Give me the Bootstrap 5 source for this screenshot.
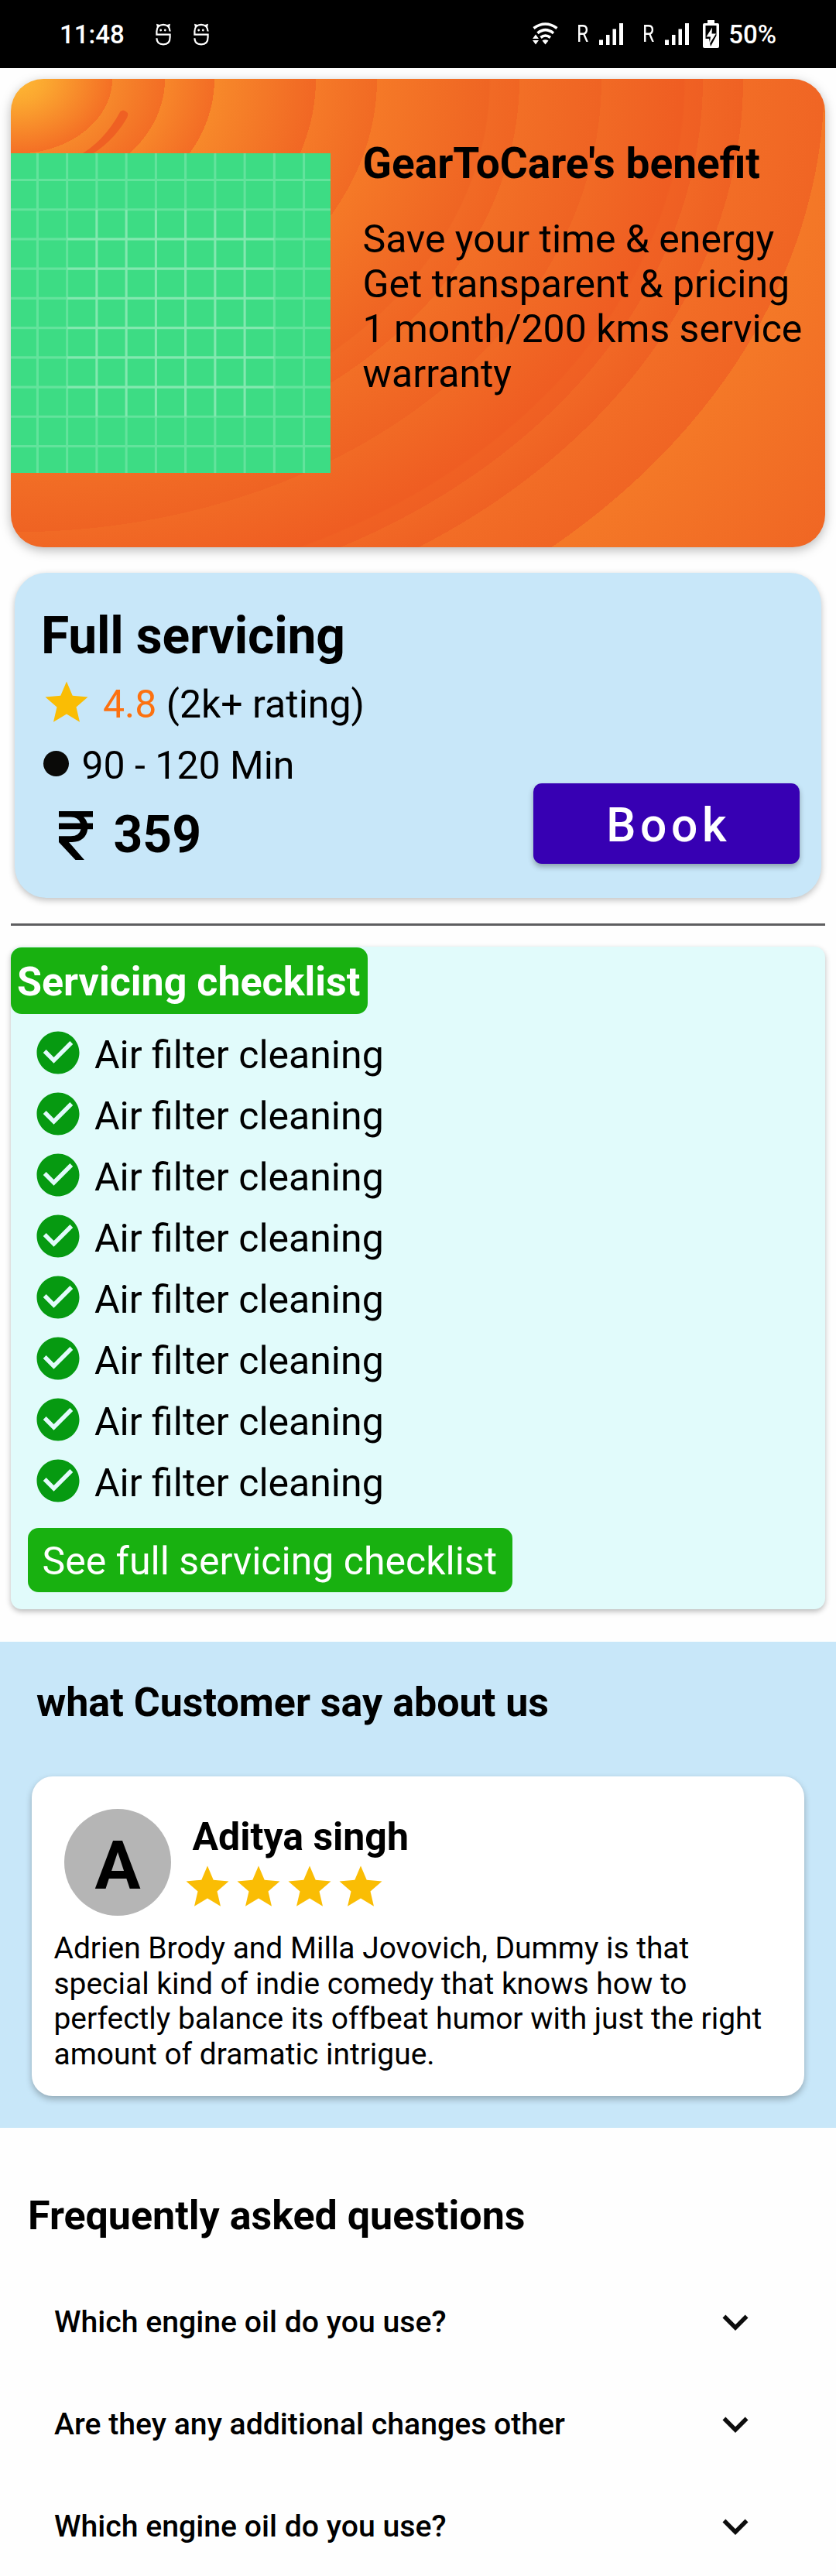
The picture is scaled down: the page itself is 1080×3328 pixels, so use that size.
<!DOCTYPE html>
<html lang="en">
<head>
<meta charset="utf-8">
<meta name="viewport" content="width=device-width, initial-scale=1">
<title>GearToCare</title>
<link href="https://cdn.jsdelivr.net/npm/bootstrap@5.3.0/dist/css/bootstrap.min.css" rel="stylesheet">
<style>
body{font-family:Roboto,"Liberation Sans",sans-serif;color:#000;background:#fefefe;font-size:50px;line-height:58px;min-height:3328px}
h1,h2,h3,p,ul{margin:0}
svg{display:block;flex:none}
.statusbar{height:88px;background:#000;color:#fff;font-size:33px;line-height:91px;font-weight:500;padding:0 77px 0 77px}
.statusbar .roam{font-weight:400;font-size:31px;width:15px;line-height:86px;transform:scaleX(.8);transform-origin:left}
.hero{margin:14px 14px 0;height:605px;border-radius:42px;overflow:hidden;
background:radial-gradient(ellipse 1300px 1005px at 6px 0,#ffb934 0,#fba730 40px,#f46f25 125px,#f6882b 125px,#f36d25 193px,#f7872a 193px,#f36c25 257px,#f7892a 257px,#f16724 388px,#f57a28 388px,#f16a24 467px,#f57927 467px,#ef6523 612px,#f16a25 614px,#f06523 651px,#f26f26 651px,#ef6323 757px,#f16a25 757px,#ef5d22 863px,#f06123 866px,#ef5f23 888px,#f16825 888px,#ef6123 940px,#f26d26 940px,#f06524 1045px,#f47827 1045px,#f06624 1300px)}
.hero-wrap{filter:drop-shadow(0 4px 7px rgba(0,0,0,.27))}
.hero .streak{position:absolute;left:14px;top:0}
.hero .art{margin-top:96px;width:413px;height:413px}
.hero .copy{padding:76.6px 0 0 41.500px;white-space:nowrap}
.hero h1{font-size:55px;line-height:64px;font-weight:700;margin-bottom:37.3px}
.service{margin:33px 19px 0;height:420px;border-radius:41px;background:#c8e7f9;border:0;box-shadow:0 3px 8px rgba(0,0,0,.25);padding:42.5px 28.5px 44px 34px}
.service h2{font-size:66px;line-height:78px;font-weight:700;letter-spacing:-.2px}
.rating{margin-top:14.5px;height:66px;gap:14px}
.rating .score{color:#fc7110}
.duration{margin-top:18.8px;padding-left:3px;gap:16.500px}
.dot{width:33px;height:33px;border-radius:50%;background:#0a0a08;margin-top:-4px}
.price{margin-top:22.7px;padding-left:23px;gap:26.5px;font-size:66px;line-height:78px;font-weight:700}
.btn-book,.btn-book:hover{background:#3700b3;color:#fff;width:343.5px;height:103.7px;border:0;border-radius:11px;font-size:60.5px;font-weight:500;letter-spacing:5.7px;line-height:98px;padding:6px 0 0 6px;box-shadow:0 4px 7px rgba(0,0,0,.3)}
.rule{margin:33px 14px 0;height:3px;background:#5e5e60}
.checks{margin:27px 14px 0;height:856px;border:0;border-radius:14px;background:#e1fbfb;box-shadow:0 3px 7px rgba(0,0,0,.27);padding-top:1px}
.checks h2{width:461px;height:86px;border-radius:14px;background:#18b110;color:#fff;font-size:52px;font-weight:700;line-height:82px;padding:4px 0 0 8px;white-space:nowrap}
.checks li{height:79px;gap:14px;padding-left:28px}
.checks li span{padding-top:7px}
.btn-more,.btn-more:hover{margin:22px 0 0 22px;width:626px;height:83px;border:0;border-radius:14px;background:#18b110;color:#fff;font-size:50px;line-height:79px;padding:4px 0 0 18.500px;text-align:left;white-space:nowrap}
.reviews{margin-top:42px;height:628px;background:#c8e7f9;padding:47.6px 41px 0}
.reviews h2{font-size:52px;line-height:62px;font-weight:700;padding-left:6px}
.review{margin-top:64px;height:413.5px;border:0;border-radius:27px;box-shadow:0 4px 8px rgba(0,0,0,.27);padding:42.5px 0 0}
.avatar{width:138px;height:138px;border-radius:50%;background:#b5b5b5;font-size:88px;font-weight:700;line-height:130px;padding-top:8px;margin-left:42px}
.review .who{margin:7px 0 0 13.500px}
.review h3{font-size:50px;line-height:58px;font-weight:700;padding-left:14px;margin-bottom:2.7px}
.review p{font-size:38.950px;line-height:45.8px;margin:19.8px 0 0 28.500px;white-space:nowrap}
.faq{padding:82.8px 97px 0 36px}
.faq h2{font-size:52px;line-height:62px;font-weight:700;margin-bottom:72.8px}
.faq .ask{height:66px;margin-bottom:66px;padding-left:34px;font-size:39.2px;line-height:46px;font-weight:500}
.faq .ask:last-child{margin-bottom:0}
</style>
</head>
<body>
<svg width="0" height="0" class="position-absolute">
  <defs>
    <symbol id="star" viewBox="0 0 24 24"><path fill="#fabd04" d="M12 17.27 18.18 21l-1.64-7.03L22 9.24l-7.19-.61L12 2 9.19 8.63 2 9.24l5.46 4.73L5.82 21z"/></symbol>
    <symbol id="check" viewBox="0 0 24 24"><path fill="#069a11" d="M12 2C6.48 2 2 6.48 2 12s4.48 10 10 10 10-4.48 10-10S17.52 2 12 2zm-2 15-5-5 1.41-1.41L10 14.17l7.59-7.59L19 8l-9 9z"/></symbol>
    <symbol id="more" viewBox="0 0 24 24"><path fill="#0d0d0d" d="M16.59 8.59 12 13.17 7.41 8.59 6 10l6 6 6-6z"/></symbol>
    <symbol id="mascot" viewBox="0 0 20 29"><g fill="none" stroke="#fff" stroke-width="2.2"><path d="M18.600 10.500C18.400 5 15 1.900 10 1.900S1.400 5 1.400 10.500V14.600H18.600V18C18.600 24.500 15.500 27.400 10 27.400S1.500 24.500 1.400 19.300"/></g><path fill="#fff" d="M1 .8 6 2.200 2 6zM19 .8 14 2.200 18 6z"/><circle cx="6.700" cy="9" r="1.400" fill="#fff"/><circle cx="12.300" cy="9" r="1.400" fill="#fff"/></symbol>
    <symbol id="signal" viewBox="0 0 31 28"><path fill="#fff" d="M0 21.500h5V28H0zM9 15h4.500v13H9zM17.500 7.500H22V28h-4.500zM26 0h5v28h-5z"/></symbol>
  </defs>
</svg>

<header class="statusbar d-flex align-items-center">
  <span>11:48</span>
  <svg width="20" height="29" style="margin-left:40px"><use href="#mascot"/></svg>
  <svg width="20" height="29" style="margin-left:29px"><use href="#mascot"/></svg>
  <div class="d-flex align-items-center ms-auto">
    <svg width="33" height="30" viewBox="0 0 33 30"><g fill="none" stroke="#fff" stroke-width="3.600"><path d="M1.500 7.500Q16.500-3.500 31.500 7.500M6.500 13.800Q16.500 5.500 27 13.800M10.500 19.500Q16.500 14.500 23 19.500"/></g><path fill="#fff" d="M16.500 28.500 12.500 23.500Q16.500 21 20.500 23.500zM0 21h8l-4-5.500zM0 23h8l-4 5.500z"/></svg>
    <span class="roam" style="margin-left:24px">R</span>
    <svg width="31" height="28" style="margin-left:14px"><use href="#signal"/></svg>
    <span class="roam" style="margin-left:25px">R</span>
    <svg width="31" height="28" style="margin-left:14px"><use href="#signal"/></svg>
    <svg width="21" height="36" viewBox="0 0 21 36" style="margin-left:18px"><path fill="#fff" d="M6 0h9v4h4q2 0 2 2v28q0 2-2 2H2q-2 0-2-2V6q0-2 2-2h4z"/><path d="M3.500 7h14v13L10 34 8 24H3.500z" fill="#000"/><path fill="#fff" d="M12 9.500 4.500 21.500H10L8.500 31 17 17.500h-5.500z"/></svg>
    <span style="margin-left:12px">50%</span>
  </div>
</header>

<main>
  <div class="hero-wrap">
    <section class="hero d-flex align-items-start">
      <svg class="streak" width="180" height="110" viewBox="0 0 180 110"><path d="M141.500 42Q146 38 151 44 152 47 149 52 130 84 98 101L86 100Q120 82 141.500 42z" fill="#ef6023"/></svg>
      <svg class="art position-relative" viewBox="0 0 108 108"><path fill="#3ddc84" d="M0 0h108v108H0z"/><path fill="none" stroke="#fff" stroke-opacity=".2" stroke-width=".8" d="M9 0v108M19 0v108M29 0v108M39 0v108M49 0v108M59 0v108M69 0v108M79 0v108M89 0v108M99 0v108M0 9h108M0 19h108M0 29h108M0 39h108M0 49h108M0 59h108M0 69h108M0 79h108M0 89h108M0 99h108"/><path fill="none" stroke="#fff" stroke-opacity=".2" stroke-width=".8" d="M19 29h70M19 39h70M19 49h70M19 59h70M19 69h70M19 79h70M29 19v70M39 19v70M49 19v70M59 19v70M69 19v70M79 19v70"/></svg>
      <div class="copy">
        <h1>GearToCare's benefit</h1>
        <p>Save your time &amp; energy<br>Get transparent &amp; pricing<br>1 month/200 kms service<br>warranty</p>
      </div>
    </section>
  </div>

  <section class="service card flex-row justify-content-between align-items-end">
    <div class="align-self-start">
      <h2>Full servicing</h2>
      <div class="rating d-flex align-items-center">
        <svg width="66" height="66"><use href="#star"/></svg>
        <div class="pt-1"><span class="score">4.8</span> (2k+ rating)</div>
      </div>
      <div class="duration d-flex align-items-center"><span class="dot"></span><span>90 - 120 Min</span></div>
      <div class="price d-flex align-items-center">
        <svg width="44" height="63" viewBox="0 0 44 63"><path d="M0 0H44V7.600H32Q35.500 10.800 36.800 15.500H44V23.200H37.200Q35 39 17 40H13L33 63H21.500L0 40V32.200H15.500Q26.500 32.200 28.500 23.200H0V15.500H27.800Q25 7.600 15.500 7.600H0z"/></svg>
        <span>359</span>
      </div>
    </div>
    <button type="button" class="btn btn-book">Book</button>
  </section>

  <div class="rule"></div>

  <section class="checks card">
    <h2>Servicing checklist</h2>
    <ul class="list-unstyled" style="margin-top:10px">
      <li class="d-flex align-items-center"><svg width="66" height="66"><use href="#check"/></svg><span>Air filter cleaning</span></li>
      <li class="d-flex align-items-center"><svg width="66" height="66"><use href="#check"/></svg><span>Air filter cleaning</span></li>
      <li class="d-flex align-items-center"><svg width="66" height="66"><use href="#check"/></svg><span>Air filter cleaning</span></li>
      <li class="d-flex align-items-center"><svg width="66" height="66"><use href="#check"/></svg><span>Air filter cleaning</span></li>
      <li class="d-flex align-items-center"><svg width="66" height="66"><use href="#check"/></svg><span>Air filter cleaning</span></li>
      <li class="d-flex align-items-center"><svg width="66" height="66"><use href="#check"/></svg><span>Air filter cleaning</span></li>
      <li class="d-flex align-items-center"><svg width="66" height="66"><use href="#check"/></svg><span>Air filter cleaning</span></li>
      <li class="d-flex align-items-center"><svg width="66" height="66"><use href="#check"/></svg><span>Air filter cleaning</span></li>
    </ul>
    <button type="button" class="btn btn-more">See full servicing checklist</button>
  </section>

  <section class="reviews">
    <h2>what Customer say about us</h2>
    <article class="review card">
      <div class="d-flex align-items-start">
        <div class="avatar text-center">A</div>
        <div class="who">
          <h3>Aditya singh</h3>
          <div class="d-flex">
            <svg width="66" height="66"><use href="#star"/></svg><svg width="66" height="66"><use href="#star"/></svg><svg width="66" height="66"><use href="#star"/></svg><svg width="66" height="66"><use href="#star"/></svg>
          </div>
        </div>
      </div>
      <p>Adrien Brody and Milla Jovovich, Dummy is that<br>special kind of indie comedy that knows how to<br>perfectly balance its offbeat humor with just the right<br>amount of dramatic intrigue.</p>
    </article>
  </section>

  <section class="faq">
    <h2>Frequently asked questions</h2>
    <div class="ask d-flex justify-content-between align-items-center"><span>Which engine oil do you use?</span><svg width="66" height="66"><use href="#more"/></svg></div>
    <div class="ask d-flex justify-content-between align-items-center"><span>Are they any additional changes other</span><svg width="66" height="66"><use href="#more"/></svg></div>
    <div class="ask d-flex justify-content-between align-items-center"><span>Which engine oil do you use?</span><svg width="66" height="66"><use href="#more"/></svg></div>
  </section>
</main>
<script src="https://cdn.jsdelivr.net/npm/bootstrap@5.3.0/dist/js/bootstrap.bundle.min.js"></script>
</body>
</html>
